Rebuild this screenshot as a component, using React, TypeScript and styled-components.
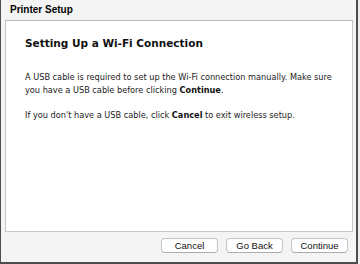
import styled, { createGlobalStyle } from 'styled-components'

const GlobalStyle = createGlobalStyle`
  html, body {
    margin: 0;
    padding: 0;
    background: #ededed;
  }
  * {
    box-sizing: border-box;
  }
`

const Window = styled.div`
  width: 358px;
  height: 264px;
  display: flex;
  flex-direction: column;
  background: #f4f4f4;
  border-left: 1px solid #4d4d4d;
  border-right: 2px solid #4d4d4d;
  border-bottom: 2px solid #4d4d4d;
  font-family: 'DejaVu Sans', 'Liberation Sans', sans-serif;
  color: #1a1a1a;
`

const TitleBar = styled.div`
  height: 20px;
  padding: 4px 0 0 9px;
  font-family: 'Liberation Sans', Arial, sans-serif;
  font-weight: bold;
  font-size: 10px;
  color: #000;
`

const Panel = styled.div`
  flex: 1;
  margin: 0 3px 0 4px;
  background: #fff;
  border: 1px solid #c6c6c6;
  border-top-color: #b8b8b8;
  padding: 15px 14px 0 19px;
`

const Heading = styled.h1`
  margin: 0 0 21px;
  font-family: 'DejaVu Sans', sans-serif;
  font-weight: bold;
  font-size: 10.5px;
  line-height: 14px;
  color: #111;
`

const Paragraph = styled.p`
  margin: 0 0 12px;
  font-size: 8.2px;
  line-height: 13px;
  color: #222;

  b {
    font-weight: bold;
    color: #111;
  }
`

const Footer = styled.div`
  height: 30px;
  display: flex;
  justify-content: flex-end;
  align-items: flex-start;
  gap: 8px;
  padding: 6px 8px 0 0;
`

const Button = styled.button`
  width: 57px;
  height: 15px;
  padding: 0;
  background: #fff;
  border: 1px solid #c4c4c4;
  border-bottom-color: #acacac;
  border-radius: 4px;
  font-family: 'Liberation Sans', Arial, sans-serif;
  font-size: 9.5px;
  color: #111;
  line-height: 13px;
`

export default function App() {
  return (
    <>
      <GlobalStyle />
      <Window>
        <TitleBar>Printer Setup</TitleBar>
        <Panel>
          <Heading>Setting Up a Wi-Fi Connection</Heading>
          <Paragraph>
            A USB cable is required to set up the Wi-Fi connection manually. Make sure
            you have a USB cable before clicking <b>Continue</b>.
          </Paragraph>
          <Paragraph>
            If you don't have a USB cable, click <b>Cancel</b> to exit wireless setup.
          </Paragraph>
        </Panel>
        <Footer>
          <Button>Cancel</Button>
          <Button>Go Back</Button>
          <Button>Continue</Button>
        </Footer>
      </Window>
    </>
  )
}
